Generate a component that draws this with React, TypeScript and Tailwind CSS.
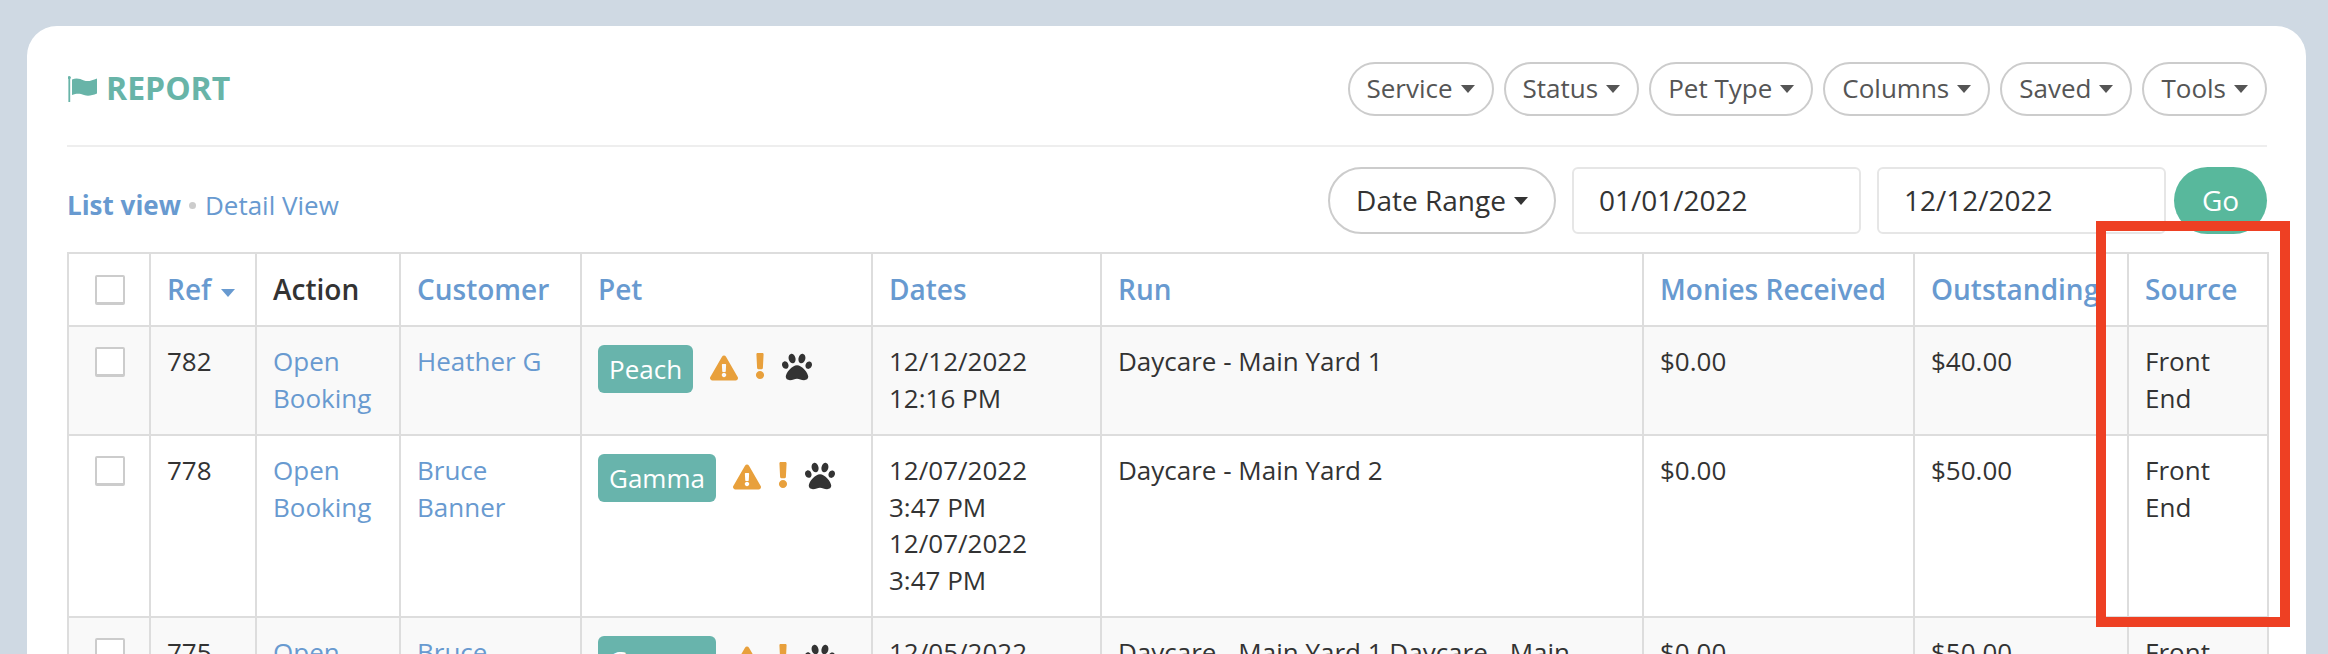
import { FaExclamation, FaExclamationTriangle, FaPaw } from "react-icons/fa";

const Caret = ({ c = "border-t-[#555]" }: { c?: string }) => (
  <span className={`inline-block w-0 h-0 ml-[8px] align-middle border-x-[7.5px] border-x-transparent border-t-[8px] ${c}`} />
);

const pills = ["Service", "Status", "Pet Type", "Columns", "Saved", "Tools"];
const Link = ({ children }: { children: React.ReactNode }) => <span className="text-[#689ad0]">{children}</span>;

const td = "border-2 border-[#dddddd] px-[16px] pt-[16px] pb-[18px] align-top";
const th = "border-2 border-[#dddddd] px-[16px] h-[73px] align-middle text-left font-semibold text-[28px] text-[#689ad0] whitespace-nowrap";

const Box = () => <div className="ml-[1px] w-[30px] h-[30px] border-2 border-[#cccccc] bg-white rounded-[2px] shadow-[inset_0_-1px_0_#ccc]" />;

const rows = [
  { ref: "782", cust: ["Heather G"], pet: "Peach", dates: ["12/12/2022", "12:16 PM"], run: "Daycare - Main Yard 1", rec: "$0.00", out: "$40.00" },
  { ref: "778", cust: ["Bruce", "Banner"], pet: "Gamma", dates: ["12/07/2022", "3:47 PM", "12/07/2022", "3:47 PM"], run: "Daycare - Main Yard 2", rec: "$0.00", out: "$50.00" },
  { ref: "775", cust: ["Bruce", "Banner"], pet: "Gamma", dates: ["12/05/2022", "3:47 PM"], run: "Daycare - Main Yard 1 Daycare - Main Yard 2", rec: "$0.00", out: "$50.00" },
];

export default function App() {
  return (
    <div className="relative h-screen overflow-hidden bg-[#cfd9e3] pt-[26px] pl-[27px] pr-[22px] font-['Open_Sans',sans-serif] text-[26px] leading-[36.5px] text-[#333333]">
      <div className="bg-white rounded-t-[30px] pt-[36px] pl-[40px] pr-[39px] h-[700px]">
        <div className="flex items-center justify-between h-[85px] border-b-2 border-[#eeeeee] pb-[30px]">
          <div className="flex items-center text-[#68b4a8] font-bold text-[32px]">
            <svg viewBox="0 0 29 26" className="w-[29px] h-[26px] ml-[1px] mr-[9px]" fill="currentColor">
              <circle cx="1.3" cy="1.5" r="1.5" />
              <rect x="0.4" y="1" width="1.8" height="25" />
              <path d="M4 3.5C9 1.5 12 3 16 4.5C20 6 24 4.5 29 2.5V17.5C24 19.5 20 20.5 16 19C12 17.5 9 17 4 19Z" />
            </svg>
            REPORT
          </div>
          <div className="flex gap-[10px]">
            {pills.map((p) => (
              <div key={p} className="h-[54px] px-[17px] flex items-center rounded-full border-2 border-[#cccccc] text-[#555555] text-[26px]">
                {p}
                <Caret />
              </div>
            ))}
          </div>
        </div>
        <div className="flex items-center justify-between mt-[20px] h-[67px]">
          <div className="flex items-center mt-[10px]">
            <span className="font-bold text-[#689ad0]">List view</span>
            <span className="w-[7px] h-[7px] rounded-full bg-[#cccccc] ml-[8px] mr-[9px]" />
            <Link>Detail View</Link>
          </div>
          <div className="flex h-full">
            <div className="w-[228px] mr-[16px] flex items-center justify-center rounded-full border-2 border-[#cccccc] text-[#333] text-[28px]">
              Date Range
              <Caret c="border-t-[#333]" />
            </div>
            <div className="w-[289px] mr-[16px] flex items-center pl-[25px] rounded-[6px] border-2 border-[#e6e6e6] text-[28px]">01/01/2022</div>
            <div className="w-[289px] mr-[8px] flex items-center pl-[25px] rounded-[6px] border-2 border-[#e6e6e6] text-[28px]">12/12/2022</div>
            <div className="w-[93px] flex items-center justify-center rounded-full bg-[#58b89c] text-white text-[28px]">Go</div>
          </div>
        </div>
        <table className="mt-[18px] w-[2200px] table-fixed border-collapse">
          <colgroup>
            <col className="w-[82px]" />
            <col className="w-[106px]" />
            <col className="w-[144px]" />
            <col className="w-[181px]" />
            <col className="w-[291px]" />
            <col className="w-[229px]" />
            <col className="w-[542px]" />
            <col className="w-[271px]" />
            <col className="w-[214px]" />
            <col className="w-[140px]" />
          </colgroup>
          <thead>
            <tr>
              <th className={th}><div className="flex justify-center"><Box /></div></th>
              <th className={th}>Ref<span className="inline-block w-[2px]" /><Caret c="border-t-[#689ad0]" /></th>
              <th className={`${th} !text-[#333333]`}>Action</th>
              <th className={th}>Customer</th>
              <th className={th}>Pet</th>
              <th className={th}>Dates</th>
              <th className={th}>Run</th>
              <th className={th}>Monies Received</th>
              <th className={th}>Outstanding</th>
              <th className={th}>Source</th>
            </tr>
          </thead>
          <tbody>
            {rows.map((r, i) => (
              <tr key={r.ref} className={i % 2 === 0 ? "bg-[#f9f9f9]" : "bg-white"}>
                <td className={td}><div className="flex justify-center mt-[4px]"><Box /></div></td>
                <td className={td}>{r.ref}</td>
                <td className={td}><Link>Open<br />Booking</Link></td>
                <td className={td}><Link>{r.cust.map((c, j) => <div key={j}>{c}</div>)}</Link></td>
                <td className={td}>
                  <div className="flex items-start">
                    <span className="px-[11px] h-[48px] mt-[2px] flex items-center rounded-[6px] bg-[#68b4ac] text-white">{r.pet}</span>
                    <FaExclamationTriangle className="ml-[17px] mt-[12px] w-[28px] h-[26px] text-[#e8a03c]" />
                    <FaExclamation className="ml-[17px] mt-[10px] w-[10px] h-[26px] text-[#e8a03c]" />
                    <FaPaw className="ml-[17px] mt-[9px] w-[30px] h-[30px] text-[#333333]" />
                  </div>
                </td>
                <td className={td}>{r.dates.map((d, j) => <div key={j}>{d}</div>)}</td>
                <td className={td}>{r.run}</td>
                <td className={td}>{r.rec}</td>
                <td className={td}>{r.out}</td>
                <td className={td}>Front<br />End</td>
              </tr>
            ))}
          </tbody>
        </table>
      </div>
      <div className="absolute left-[2096px] top-[221px] w-[194px] h-[406px] border-[10px] border-[#ee4023]" />
    </div>
  );
}
